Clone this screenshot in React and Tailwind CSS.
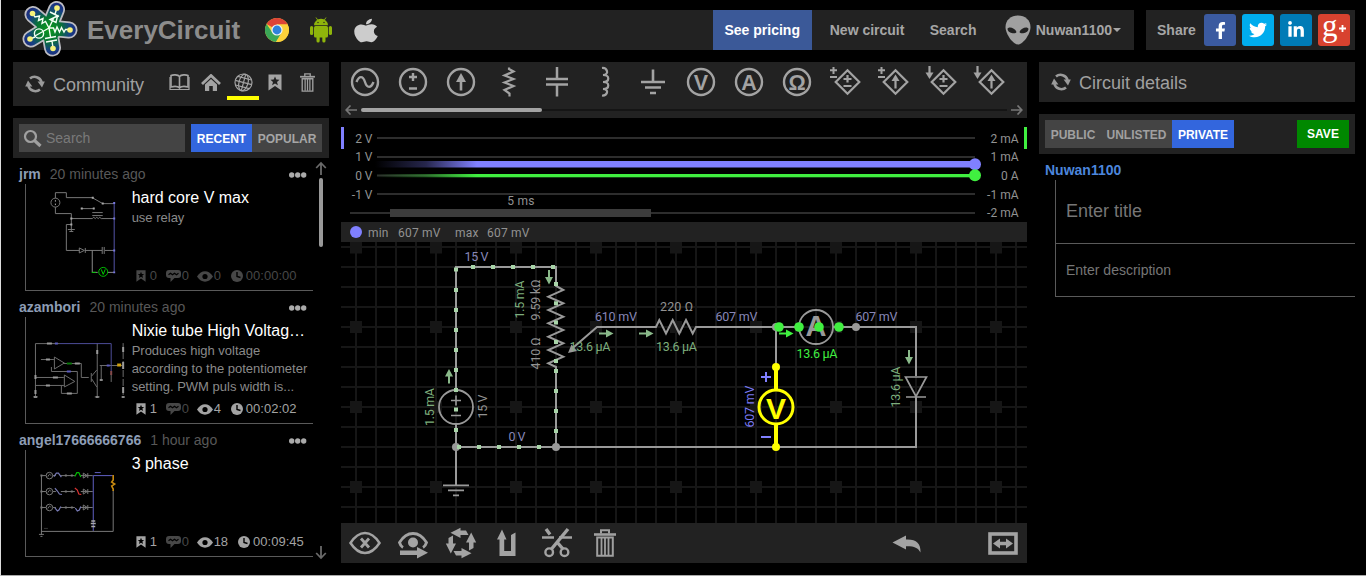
import React from "react";
import { FaApple, FaFacebookF, FaTwitter, FaLinkedinIn } from "react-icons/fa";

const SANS = "font-['Liberation_Sans',Arial,sans-serif]";

/* ---------- small shared icons ---------- */

function Refresh() {
  return (
    <svg width="20" height="18" viewBox="0 0 20 18" className="shrink-0">
      <g fill="none" stroke="#9b9b9b" strokeWidth="2.6">
        <path d="M5 3.6A7.2 7.2 0 0 1 16.6 7" />
        <path d="M15 14.4A7.2 7.2 0 0 1 3.4 11" />
      </g>
      <path d="M12.6 6.6H19.8L17 12.4Z" fill="#9b9b9b" />
      <path d="M0.2 11.4H7.4L3 5.6Z" fill="#9b9b9b" />
    </svg>
  );
}

function Trash({ w, h }) {
  return (
    <svg width={w} height={h} viewBox="0 0 22 28">
      <g fill="none" stroke="#9f9f9f" strokeWidth="2">
        <path d="M0 5.5H22" strokeWidth="2.6" />
        <path d="M7 4.500V1.200H15V4.500" />
        <path d="M3.200 8.500V26.800H18.800V8.500Z" />
        <path d="M7.500 9V26M11 9V26M14.500 9V26" strokeWidth="1.800" />
      </g>
    </svg>
  );
}

function BookmarkStar({ w, h, color = "#a3a3a3", hole = "#222" }) {
  return (
    <svg width={w} height={h} viewBox="0 0 14 17">
      <path d="M0.500 0.500H13.500V16.500L7 12L0.500 16.500Z" fill={color} />
      <path d="M7 2.500L8.300 5.600L11.500 5.800L9 7.900L9.900 11.200L7 9.400L4.100 11.200L5 7.900L2.500 5.800L5.700 5.600Z" fill={hole} />
    </svg>
  );
}

/* ---------- header ---------- */

function Logo() {
  const arms = "M28 27L35.500 8.500M28 27L12 13.500M28 27L10 38M28 27L31.500 47M28 27L48 29";
  return (
    <svg width="58" height="58" viewBox="0 0 58 58" className="-my-[9px] shrink-0">
      <defs>
        <radialGradient id="lg" gradientUnits="userSpaceOnUse" cx="28" cy="28" r="27">
          <stop offset="0" stopColor="#0a9a1a" />
          <stop offset="0.45" stopColor="#087434" />
          <stop offset="0.8" stopColor="#173f86" />
          <stop offset="1" stopColor="#1b2d7c" />
        </radialGradient>
      </defs>
      <g strokeLinecap="round" strokeLinejoin="round" fill="none">
        <path d={arms} stroke="#bcbcc2" strokeWidth="17" />
        <circle cx="28" cy="28" r="13.500" fill="#bcbcc2" />
        <circle cx="28" cy="28" r="11.800" fill="url(#lg)" />
        <path d={arms} stroke="url(#lg)" strokeWidth="13.500" />
      </g>
      <g fill="none" stroke="#f4fff4" strokeWidth="1.400">
        <path d="M28 27L32.500 17.500M34 13L36 7M29 11L38 15.500M36.500 15L29 18.500L35 21.500Z" />
        <path d="M28 27L24.500 20.500L21 22.500L22 17.500L17.500 19.500L18.500 15L14 16L11.500 12.500" />
        <path d="M28 27L32.500 27L34 31L36 26L38.500 31L40.500 26.500L43 31L44.500 28.500H49" />
        <path d="M28 27L14 35M14 36L9 38" />
        <circle cx="18" cy="32.500" r="4.600" />
        <path d="M28 27L29.500 36M24 37.500L35 35.500M25 41L36 39M31 40L32 47" />
      </g>
      <g fill="#f6f27a">
        <circle cx="36" cy="7" r="2.800" />
        <circle cx="11.500" cy="12.500" r="2.800" />
        <circle cx="49" cy="29" r="2.800" />
        <circle cx="9" cy="38" r="2.800" />
        <circle cx="32" cy="47.500" r="2.800" />
      </g>
    </svg>
  );
}

function Chrome() {
  return (
    <svg width="24" height="24" viewBox="0 0 24 24">
      <circle cx="12" cy="12" r="12" fill="#fbd13a" />
      <path d="M12 12L1.600 6A12 12 0 0 1 22.400 6L22.500 6.600H12Z" fill="#dd4437" />
      <path d="M1.600 6A12 12 0 0 0 11 24L16.600 14.800L12 12L7 14Z" fill="#3aa757" />
      <path d="M12 6.600H22.600A12 12 0 0 1 11 24L16.800 14.500Z" fill="#fbd13a" />
      <circle cx="12" cy="12" r="5.600" fill="#eef2f6" />
      <circle cx="12" cy="12" r="4.400" fill="#2e82dc" />
    </svg>
  );
}

function Android() {
  return (
    <svg width="22" height="26" viewBox="0 0 22 26" fill="#8fb50b">
      <path d="M4 8.300A7 6.500 0 0 1 18 8.300Z" />
      <path d="M6 0.500L8 3.500M16 0.500L14 3.500" stroke="#8fb50b" strokeWidth="0.900" />
      <rect x="4" y="9" width="14" height="11.500" rx="1.500" />
      <rect x="0" y="9" width="3.200" height="9" rx="1.600" />
      <rect x="18.800" y="9" width="3.200" height="9" rx="1.600" />
      <rect x="6.500" y="17" width="3.200" height="8.500" rx="1.600" />
      <rect x="12.300" y="17" width="3.200" height="8.500" rx="1.600" />
      <circle cx="8" cy="5.500" r="0.700" fill="#222" />
      <circle cx="14" cy="5.500" r="0.700" fill="#222" />
    </svg>
  );
}

function Header() {
  return (
    <header className="flex h-10 gap-3">
      <div className="flex h-10 w-[1121px] items-center bg-[#222] text-sm font-bold text-[#a6a6a6]">
        <div className="ml-2 w-[66px]"><Logo /></div>
        <span className="w-[178px] text-[26px] leading-10 text-[#8c8c8c]">EveryCircuit</span>
        <span className="w-[45px]"><Chrome /></span>
        <span className="w-[44px]"><Android /></span>
        <FaApple className="h-[27px] w-[24px] shrink-0 text-[#ccc]" preserveAspectRatio="none" />
        <div className="ml-auto flex h-10 w-[99px] items-center justify-center bg-[#3b5998] text-white">See pricing</div>
        <span className="ml-[18px] w-[100px]">New circuit</span>
        <span className="w-[75px]">Search</span>
        <svg width="26" height="30" viewBox="0 0 26 30" className="shrink-0">
          <path d="M13 0.500C20 0.500 25.500 5 25.500 12C25.500 19 18 29.500 13 29.500C8 29.500 0.500 19 0.500 12C0.500 5 6 0.500 13 0.500Z" fill="#a0a0a0" />
          <path d="M2.500 14C3 11 10 12.500 11.500 17C11 19.500 3 18.500 2.500 14ZM23.500 14C23 11 16 12.500 14.500 17C15 19.500 23 18.500 23.500 14Z" fill="#222" />
        </svg>
        <span className="ml-[5px]">Nuwan1100</span>
        <svg width="8" height="4" viewBox="0 0 8 4" className="mr-[13px] ml-px shrink-0"><path d="M0 0H8L4 4Z" fill="#a6a6a6" /></svg>
      </div>
      <div className="flex h-10 w-[209px] items-center gap-[6px] bg-[#222] pl-[11px] text-sm font-bold text-[#a6a6a6]">
        <span className="w-[41px]">Share</span>
        <span className="flex size-8 items-center justify-center rounded-[3px] bg-[#3b5aa0] text-white"><FaFacebookF size={17} /></span>
        <span className="flex size-8 items-center justify-center rounded-[3px] bg-[#00aced] text-white"><FaTwitter size={18} /></span>
        <span className="flex size-8 items-center justify-center rounded-[3px] bg-[#007bb6] text-white"><FaLinkedinIn size={18} /></span>
        <span className="flex size-8 items-center rounded-[3px] bg-[#d8422f] pb-2 pl-1 text-white">
          <span className="font-['Liberation_Serif',serif] text-[31px] leading-8 font-normal">g</span>
          <svg width="9" height="9" viewBox="0 0 9 9" className="mt-1"><path d="M1 4.500H8M4.500 1V8" stroke="#fff" strokeWidth="1.800" /></svg>
        </span>
      </div>
    </header>
  );
}

/* ---------- community column ---------- */

function CommunityBar() {
  return (
    <div className="flex h-11 bg-[#222] pr-[6px] pl-3">
      <div className="flex h-11 items-center gap-2 text-lg text-[#a0a0a0]">
        <Refresh />
        <span className="pt-[2px]">Community</span>
      </div>
      <div className="ml-auto flex">
        <div className="flex h-[38px] w-8 items-center justify-center pt-[3px]">
          <svg width="21" height="17" viewBox="0 0 21 17" fill="none" stroke="#a3a3a3" strokeWidth="1.600">
            <path d="M10.500 2.500C9 0.500 4 0.500 2 1.500V13C5 12.200 9 12.500 10.500 14C12 12.500 16 12.200 19 13V1.500C17 0.500 12 0.500 10.500 2.500V14" />
            <path d="M1 3V15.500H20V3" strokeWidth="1.200" />
          </svg>
        </div>
        <div className="flex h-[38px] w-8 items-center justify-center pt-[3px]">
          <svg width="20" height="17" viewBox="0 0 20 17">
            <path d="M1 10L10 1.500L19 10" fill="none" stroke="#a3a3a3" strokeWidth="2.800" />
            <path d="M4 10.500L10 5L16 10.500V17H11.800V12H8.200V17H4Z" fill="#a3a3a3" />
          </svg>
        </div>
        <div className="flex h-[38px] w-8 items-center justify-center border-b-4 border-[#ff0] pt-[7px]">
          <svg width="19" height="19" viewBox="0 0 19 19" fill="none" stroke="#a3a3a3" strokeWidth="1.200">
            <circle cx="9.500" cy="9.500" r="8.500" />
            <g transform="rotate(15 9.500 9.500)">
              <ellipse cx="9.500" cy="9.500" rx="4.500" ry="8.500" />
              <path d="M9.500 1V18M1 9.500H18M2.500 5H16.500M2.500 14H16.500" />
            </g>
          </svg>
        </div>
        <div className="flex h-[38px] w-8 items-center justify-center pt-[3px]"><BookmarkStar w={14} h={17} /></div>
        <div className="flex h-[38px] w-8 items-center justify-center pt-[3px]"><Trash w={15} h={19} /></div>
      </div>
    </div>
  );
}

function SearchBar() {
  return (
    <div className="flex h-10 items-center bg-[#222] px-[6px] pr-[7px]">
      <div className="flex h-7 w-[166px] items-center gap-1 bg-[#444] pl-1 text-sm text-[#7a7a7a]">
        <svg width="19" height="19" viewBox="0 0 19 19" fill="none" stroke="#a0a0a0">
          <circle cx="7.500" cy="7.500" r="5.500" strokeWidth="2.200" />
          <path d="M11.500 11.500L17.500 17" strokeWidth="3.200" />
        </svg>
        <span>Search</span>
      </div>
      <div className="ml-[6px] flex h-7 text-xs font-bold">
        <span className="flex w-[61px] items-center justify-center bg-[#36d] pt-px text-white">RECENT</span>
        <span className="flex w-[70px] items-center justify-center bg-[#444] pt-px text-[#a6a6a6]">POPULAR</span>
      </div>
    </div>
  );
}

function Thumb1() {
  return (
    <svg width="106" height="106" viewBox="26 184 106 106" fill="none" strokeWidth="1" stroke="#777">
      <circle cx="55.500" cy="202.500" r="4.500" />
      <path d="M55.500 200v1.500M55.500 203.500v1.500" stroke="#aaa" />
      <path d="M55.500 198V192.500H66.500V197.500H92.500L103 203.500H114M81 208.500H94M55.500 207V213.500H71.500V231M71.500 218.500H92.500M92.500 212.500H103M92.500 215.500H103M92.500 218.500q1.500 -2.500 3 0q1.500 -2.500 3 0q1.500 -2.500 3 0H114" />
      <path d="M68 229.500H75M69.500 231.500H73.500M71.500 224.500H66.500V250.500H79.500M79.500 248V253L84.500 250.500ZM85.500 248V253M85 250.500H102.500M102.500 247V254M104.500 247V254M105 250.500H114" />
      <path d="M114.500 203V272" stroke="#5555aa" />
      <path d="M92.500 250.500V272.500H98M108 272.500H114" stroke="#8a8a8a" />
      <circle cx="103.500" cy="272" r="4.500" stroke="#0b0" />
      <path d="M101.500 269.500L103.500 274.500L105.500 269.500" stroke="#0c0" />
      <path d="M92 272.500h4" stroke="#0c0" />
      <g fill="#7777dd" stroke="none">
        <path d="M113.500 202h2v2h-2zM113.500 217.500h2v2h-2zM113.500 249.500h2v2h-2zM113.500 271.500h2v2h-2z" />
        <path d="M70.500 217.500h2v2h-2zM70.500 223.500h2v2h-2zM81 207.500h2v2h-2zM93 207.500h2v2h-2zM92 196.500h2v2h-2zM102 202.500h2v2h-2z" fill="#aaa" />
      </g>
    </svg>
  );
}

function Thumb2() {
  return (
    <svg width="106" height="106" viewBox="26 317 106 106" fill="none" strokeWidth="1" stroke="#6c6c6c">
      <path d="M35.500 397V343.500H60M41 359.500H54M54.500 357V369L64.500 363ZM64 363.500H81.500V377.500H89M51.500 367V371.500H77.500V393.500H61.500V386M35 377.500H64M35 385.500H64M64.500 375V387L75 381.500ZM91.500 373V382M92 376L97 370M92 379L97 387M97.500 343V397M100 365.500H123M101.500 365V380M111.500 373V382M95 397h5M33 397h5" />
      <path d="M60 343.500H111.500V372" stroke="#4d4d9a" />
      <path d="M123.500 343V397" strokeDasharray="7 2" />
      <g strokeWidth="2">
        <path d="M47 343.500H52M46 359.500H50M75 363.500H80M53 377.500H58M46 385.500H50M67 393.500H72M97.500 350V354M35.500 375V379M35.500 390V394M123.500 347V352M123.500 362V369M123.500 387V393" stroke="#999" />
        <path d="M67 363.500H72" stroke="#087808" />
        <path d="M55 343.500H58M67 371.500H71M107 365.500H110" stroke="#5c5cc0" />
        <path d="M117.500 365H121.500" stroke="#d0a010" strokeWidth="3" />
        <path d="M111.500 371V375" stroke="#854a4a" />
      </g>
      <path d="M34 396h3v2h-3zM96 396h3v2h-3zM122 396h3v2h-3zM100 379h3v2h-3z" fill="#888" stroke="none" />
    </svg>
  );
}

function Thumb3() {
  return (
    <svg width="106" height="106" viewBox="26 450 106 106" fill="none" strokeWidth="1" stroke="#777">
      <path d="M41.500 475V535M39 534.500H44M40.500 536.500H42.500M41 531.500H113.500V490" />
      {[475.5, 491.5, 507.5].map((y) => (
        <g key={y}>
          <path d={`M41 ${y}H46M53 ${y}H56M61 ${y}H75M81 ${y}H93M83.500 ${y - 2.500}v5l4 -2.500zM88 ${y - 2.500}v5`} />
          <circle cx="49.500" cy={y} r="3.300" />
          <path d={`M48 ${y + 1}q1.500 -4 3 -1`} />
          <path d={`M65 ${y - 1}h2v2h-2zM71 ${y - 1}h2v2h-2zM40.500 ${y - 1}h2v2h-2z`} fill="#777" stroke="none" />
        </g>
      ))}
      <g strokeWidth="1.200">
        <path d="M54 476.500L56.500 473L58.500 473L61.500 477M55 488L57.500 491L59.500 494L62 494.500M55 508L57.500 511L59 510L61 506.500M75.500 508L77.500 511L79.500 510L81 506.500" stroke="#777ab5" />
        <path d="M75 476.500L77 472.500L79 472.500L81 477" stroke="#0b0" />
        <path d="M75 488L77.500 490L79 494L81.500 494.500" stroke="#d33" />
      </g>
      <path d="M93.500 531V475.500H113M95 472.500H101" stroke="#6060c4" />
      <path d="M113.500 475V480L112 482L115 484L112 486L113.500 489V491" stroke="#c88a10" strokeWidth="1.600" />
      <path d="M91.500 521H95.500M91 523.500H96M91.500 526.500H95.500" stroke="#aaa" strokeWidth="1.500" />
      <path d="M44 528.500h4" stroke="#333" />
    </svg>
  );
}

const posts = [
  { user: "jrm", ago: "20 minutes ago", title: "hard core V max", text: "use relay", thumb: Thumb1, stats: ["0", "0", "0", "00:00:00"] },
  { user: "azambori", ago: "20 minutes ago", title: "Nixie tube High Voltag…", text: "Produces high voltage according to the potentiometer setting. PWM puls width is...", thumb: Thumb2, stats: ["1", "0", "4", "00:02:02"] },
  { user: "angel17666666766", ago: "1 hour ago", title: "3 phase", text: "", thumb: Thumb3, stats: ["1", "0", "18", "00:09:45"] },
];

const tone = (value) => (/^[0:]+$/.test(value) ? "text-[#474747]" : "text-[#a3a3a3]");

function Stats({ values }) {
  const [stars, comments, views, time] = values;
  return (
    <div className="flex h-4 items-center pl-1 text-[13px] leading-4">
      <span className={`flex w-[30px] items-center gap-1 ${tone(stars)}`}>
        <BookmarkStar w={10} h={12} color="currentColor" hole="#000" />{stars}
      </span>
      <span className={`flex w-[31px] items-center gap-px ${tone(comments)}`}>
        <svg width="15" height="12" viewBox="0 0 15 12">
          <path d="M3 0H12Q15 0 15 3V5Q15 8 12 8H8.500L4.500 12V8H3Q0 8 0 5V3Q0 0 3 0Z" fill="currentColor" />
          <path d="M2.500 4.800L4.500 3.300L6.500 4.800L8.500 3.300L10.500 4.800L12.500 3.300" fill="none" stroke="#000" strokeWidth="1.200" />
        </svg>
        {comments}
      </span>
      <span className={`flex items-center gap-px ${tone(views)}`}>
        <svg width="16" height="11" viewBox="0 0 16 11">
          <path d="M0 5.500Q3.500 0.300 8 0.300T16 5.500Q12.500 10.700 8 10.700T0 5.500Z" fill="currentColor" />
          <circle cx="8" cy="5.500" r="2.600" fill="#000" />
        </svg>
        {views}
      </span>
      <span className={`ml-[10px] flex items-center gap-[3px] ${tone(time)}`}>
        <svg width="12" height="12" viewBox="0 0 12 12">
          <circle cx="6" cy="6" r="6" fill="currentColor" />
          <path d="M6 2V6.500L9.500 7.500" fill="none" stroke="#000" strokeWidth="1.400" />
        </svg>
        {time}
      </span>
    </div>
  );
}

function Post({ post }) {
  const Thumb = post.thumb;
  return (
    <article className="mb-[7px] h-[126px] w-[294px]">
      <div className="flex h-[19px] items-center text-sm leading-[19px]">
        <b className="text-[#8d9db5]">{post.user}</b>
        <span className="ml-[9px] text-[#585858]">{post.ago}</span>
        <svg width="18" height="6" viewBox="0 0 18 6" fill="#aaa" className="mt-px mr-[6px] ml-auto">
          <circle cx="2.700" cy="3" r="2.700" /><circle cx="8.700" cy="3" r="2.700" /><circle cx="14.700" cy="3" r="2.700" />
        </svg>
      </div>
      <div className="ml-[6px] flex h-[107px] border-b border-l border-[#5a5a5a]">
        <Thumb />
        <div className="flex w-[182px] flex-col">
          <h3 className="pt-1 text-base leading-[19px] whitespace-nowrap text-white">{post.title}</h3>
          <p className="mt-[2px] h-[59px] text-[13px] leading-[18px] text-[#8a8a8a]">{post.text}</p>
          <Stats values={post.stats} />
        </div>
      </div>
    </article>
  );
}

function PostList() {
  return (
    <div className="flex h-[405px] pt-[7px] pl-[6px]">
      <div>{posts.map((p) => <Post key={p.user} post={p} />)}</div>
      <div className="-mt-1 ml-[2px] flex h-[399px] w-3 flex-col items-center">
        <svg width="12" height="14" viewBox="0 0 12 14" fill="none" stroke="#6a6a6a" strokeWidth="1.800"><path d="M6 14V2M1.200 7L6 2L10.800 7" /></svg>
        <div className="mt-[3px] h-[69px] w-1 rounded-sm bg-[#999]" />
        <svg width="12" height="14" viewBox="0 0 12 14" fill="none" stroke="#6a6a6a" strokeWidth="1.800" className="mt-auto"><path d="M6 0V12M1.200 7L6 12L10.800 7" /></svg>
      </div>
    </div>
  );
}

/* ---------- simulator column ---------- */

const Ring = () => <circle cx="24" cy="20" r="13" strokeWidth="2.400" />;
const Letter = ({ children }) => (
  <text x="24" y="27.500" fontSize="21.500" fontWeight="700" textAnchor="middle" fill="#a3a3a3" stroke="none" fontFamily="Liberation Sans, sans-serif">{children}</text>
);
const Diamond = () => <path d="M26.500 8.200L38.300 20L26.500 31.800L14.700 20Z" strokeWidth="2.200" />;
const SmallPM = () => <path d="M12.500 5V12M9 8.300H16M9 15H16" strokeWidth="2" />;
const SmallArrow = () => <g><path d="M12.500 4V12" /><path d="M8.500 10.500H16.500L12.500 17Z" fill="#a3a3a3" stroke="none" /></g>;
const InnerPM = () => <path d="M26.500 13V20.500M22.500 17H30.500M22.500 24H30.500" />;
const InnerArrow = () => <g><path d="M26.500 18V26.500" /><path d="M22.500 19H30.500L26.500 12.500Z" fill="#a3a3a3" stroke="none" /></g>;

const parts = [
  <><Ring /><path d="M15.500 20C18 13.500 22 13.500 24 20S30 26.500 32.500 20" strokeWidth="2.400" /></>,
  <><Ring /><path d="M24 11V19M20 15H28M20 26.500H28" strokeWidth="2.400" /></>,
  <><Ring /><path d="M24 18V28.500" strokeWidth="2.600" /><path d="M19 20H29L24 11Z" fill="#a3a3a3" stroke="none" /></>,
  <path d="M24 5.500V7L28.500 9.500L19.500 13.500L28.500 17L19.500 20.500L28.500 24L19.500 28L24.500 31.500V34.500" />,
  <path d="M24 5V16.500M13 17H35M13 22.500H35M24 23V34.500" strokeWidth="2.500" />,
  <path d="M21 6C26 5.500 29 12.500 22 13C29 13 29 20 22 20C29 20 29 27 22 27C29 27.500 26 34 21 33.500" />,
  <path d="M24 7.500V20M12 20H36M16 25.500H32M21 31H27" strokeWidth="2.600" />,
  <><Ring /><Letter>V</Letter></>,
  <><Ring /><Letter>A</Letter></>,
  <><Ring /><Letter>Ω</Letter></>,
  <><Diamond /><SmallPM /><InnerPM /></>,
  <><Diamond /><SmallPM /><InnerArrow /></>,
  <><Diamond /><SmallArrow /><InnerPM /></>,
  <><Diamond /><SmallArrow /><InnerArrow /></>,
];

function PartsBar() {
  return (
    <div className="flex h-14 flex-col bg-[#222]">
      <div className="flex h-10">
        {parts.map((p, i) => (
          <svg key={i} width="48" height="40" viewBox="0 0 48 40" fill="none" stroke="#a3a3a3" strokeWidth="2.200">{p}</svg>
        ))}
      </div>
      <div className="flex h-4 items-center px-1">
        <svg width="12" height="10" viewBox="0 0 12 10" fill="none" stroke="#777" strokeWidth="1.700"><path d="M12 5H1.500M5.500 0.500L1.200 5L5.500 9.500" /></svg>
        <div className="ml-1 flex h-1 w-[646px] items-center">
          <div className="h-1 w-[181px] rounded-sm bg-[#a3a3a3]" />
          <div className="h-[2px] flex-1 bg-[#151515]" />
        </div>
        <svg width="12" height="10" viewBox="0 0 12 10" fill="none" stroke="#777" strokeWidth="1.700" className="ml-1"><path d="M0 5H10.500M6.500 0.500L10.800 5L6.500 9.500" /></svg>
      </div>
    </div>
  );
}

function Plot() {
  const rows = [
    [138, 143, "2 V", "2 mA"],
    [157, 161, "1 V", "1 mA"],
    [175.5, 180, "0 V", "0 A"],
    [194, 199, "-1 V", "-1 mA"],
    [213, 217, null, "-2 mA"],
  ];
  return (
    <svg width="686" height="104" viewBox="341 118 686 104" className="block" fontFamily="Roboto, sans-serif" fontSize="12">
      <defs>
        <linearGradient id="pv" gradientUnits="userSpaceOnUse" x1="375" x2="477" y1="0" y2="0"><stop offset="0" stopColor="#8080ff" stopOpacity="0" /><stop offset="0.500" stopColor="#8080ff" stopOpacity="0.300" /><stop offset="1" stopColor="#8080ff" /></linearGradient>
        <linearGradient id="pg" gradientUnits="userSpaceOnUse" x1="375" x2="477" y1="0" y2="0"><stop offset="0" stopColor="#40ef40" stopOpacity="0" /><stop offset="0.500" stopColor="#40ef40" stopOpacity="0.350" /><stop offset="1" stopColor="#40ef40" /></linearGradient>
      </defs>
      {rows.map(([y, base, l, r]) => (
        <g key={y} fill="#929292">
          <rect x={l ? 377 : 350} y={y - 1} width={l ? 598 : 625} height="2" fill="#2d2d2d" />
          {l && <text x="372.500" y={base} textAnchor="end">{l}</text>}
          <text x="1018.500" y={base} textAnchor="end">{r}</text>
        </g>
      ))}
      <rect x="390" y="209" width="261" height="8" fill="#3c3c3c" />
      <text x="521" y="205" textAnchor="middle" fill="#929292" letterSpacing="0.250">5 ms</text>
      <rect x="375" y="161" width="600" height="6.500" fill="url(#pv)" />
      <rect x="375" y="174" width="600" height="3.300" fill="url(#pg)" />
      <circle cx="975" cy="164.300" r="6" fill="#8080ff" />
      <circle cx="975" cy="175.300" r="6" fill="#40ef40" />
      <rect x="341" y="127" width="3" height="22" fill="#8080ff" />
      <rect x="1024" y="127" width="3" height="22" fill="#40ef40" />
    </svg>
  );
}

function ReadoutBar() {
  return (
    <div className="flex h-5 items-center bg-[#222] pl-[9px] font-['Roboto',sans-serif] text-xs tracking-[0.2px] text-[#929292]">
      <span className="size-3 rounded-full bg-[#8080ff]" />
      <span className="mt-px ml-[6px] w-[30px]">min</span>
      <span className="mt-px w-[57px]">607 mV</span>
      <span className="mt-px w-8">max</span>
      <span className="mt-px">607 mV</span>
    </div>
  );
}

const columns = Array.from({ length: 34 }, (_, i) => 356 + i * 20);
const lines = Array.from({ length: 14 }, (_, i) => 247 + i * 20);

function Label({ x, y, w, color = "#8787b8", up, children }) {
  return (
    <text x={x} y={y} textLength={w} fill={color} transform={up ? `rotate(-90 ${x} ${y})` : undefined}>{children}</text>
  );
}

const flow = [
  [[456, 269.500], [456, 290], [456, 310], [456, 330], [456, 350], [456, 370], [456, 390], [456, 409.500], [456, 430]],
  [[473, 267], [493, 267], [513, 267], [533, 267], [553, 267]],
  [[556, 284], [556, 303.300], [556, 322.500], [556, 342], [556, 361], [556, 371], [556, 391], [556, 411], [556, 431]],
  [[459, 447], [479, 447], [499, 447], [519, 447], [539, 447]],
].flat();

function Arrow({ x, y, angle, color = "#8ab98a" }) {
  return (
    <g transform={`translate(${x} ${y}) rotate(${angle})`}>
      <path d="M-7 0H1" stroke={color} strokeWidth="2" />
      <path d="M0 -4L7.500 0L0 4Z" fill={color} />
    </g>
  );
}

function Schematic() {
  return (
    <svg width="686" height="281" viewBox="341 242 686 281" className="block" fontFamily="Roboto, sans-serif" fontSize="12.500">
      <g fill="#161616">
        {columns.map((x) => <rect key={x} x={x - 1} y="242" width="2" height="281" />)}
        {lines.map((y) => <rect key={y} x="341" y={y - 1} width="686" height="2" />)}
        {[247.500, 327, 407, 487].map((y) => columns.filter((_, i) => i % 4 === 0).map((x) => <rect key={`${x}-${y}`} x={x - 6} y={y - 6} width="12" height="12" />))}
      </g>
      <g fill="none" stroke="#999" strokeWidth="2">
        <path d="M456 390V267H556V286L563.300 290L548.300 296.700L563.300 303.300L548.300 310L563.300 316.700L548.300 323.300L563.300 330L548.300 336.700L563.300 343.300L548.300 350L563.300 356.700L548.300 363.300L556 367V447" strokeWidth="2" />
        <path d="M456 424V485M456 447H916V397M916 376V327H833M799 327H776M776 327V367" />
        <circle cx="456" cy="407" r="17" strokeWidth="1.800" />
        <path d="M451 400.500H461M456 395.500V405.500M451 415.500H461" strokeWidth="1.600" />
        <path d="M443 485.300H469M448 490.300H464M453 495.300H459" strokeWidth="1.800" />
        <path d="M776 327H696L692.700 333.500L686 320L679.300 333.500L672.700 320L666 333.500L659.300 320L656 327H597L571 349.500" strokeWidth="2" />
        <circle cx="816" cy="327" r="17" strokeWidth="1.800" />
        <path d="M905.500 377H926.500L916 396.500ZM906 397H926" strokeWidth="1.700" />
      </g>
      <g fill="#999">
        <path d="M568 353L571.500 344.500L577 351Z" />
        <circle cx="456" cy="447" r="4" /><circle cx="556" cy="447" r="4" /><circle cx="776" cy="327" r="4" /><circle cx="856" cy="327" r="4" />
        <text x="816" y="336" fontSize="29" fontWeight="700" textAnchor="middle" fontFamily="Liberation Sans, sans-serif">A</text>
      </g>
      {flow.map(([x, y], i) => <rect key={i} x={x - 2} y={y - 2} width="4" height="4" fill="#a8d4a8" />)}
      <Arrow x={449} y={376.500} angle={-90} />
      <Arrow x={549} y={277} angle={90} />
      <Arrow x={606} y={333.500} angle={0} />
      <Arrow x={646} y={333.500} angle={0} />
      <Arrow x={909} y={357} angle={90} />
      <Arrow x={786} y={333.500} angle={0} color="#40ef40" />
      {[779, 799, 819, 839].map((x) => <circle key={x} cx={x} cy="327" r="4.800" fill="#40ef40" />)}
      <g fill="none" stroke="#ff0" strokeWidth="4">
        <path d="M776 367V390M776 424V447" />
        <circle cx="776" cy="407" r="17" strokeWidth="3" />
      </g>
      <g fill="#ff0">
        <circle cx="776" cy="367" r="4" /><circle cx="776" cy="447" r="4" />
        <text x="776" y="418.500" fontSize="30" fontWeight="700" textAnchor="middle" fontFamily="Liberation Sans, sans-serif">V</text>
      </g>
      <path d="M761 377H771M766 372V382M761 437H771" stroke="#8080ff" strokeWidth="2" />
      <Label x={464.500} y={261} w={24}>15 V</Label>
      <Label x={508.500} y={441} w={17}>0 V</Label>
      <Label x={595} y={321} w={42}>610 mV</Label>
      <Label x={715.500} y={321} w={42}>607 mV</Label>
      <Label x={855.500} y={321} w={42}>607 mV</Label>
      <Label x={660} y={311} w={33} color="#929292">220 Ω</Label>
      <Label x={569.500} y={351} w={41} color="#7dae7d">13.6 µA</Label>
      <Label x={656} y={351} w={41} color="#7dae7d">13.6 µA</Label>
      <Label x={796.500} y={358} w={41} color="#40ef40">13.6 µA</Label>
      <Label x={434} y={426} w={38} color="#7dae7d" up>1.5 mA</Label>
      <Label x={487} y={418.500} w={24} color="#929292" up>15 V</Label>
      <Label x={524} y={318.500} w={38} color="#7dae7d" up>1.5 mA</Label>
      <Label x={540} y={320.500} w={41} color="#929292" up>9.59 kΩ</Label>
      <Label x={540} y={369.500} w={32} color="#929292" up>410 Ω</Label>
      <Label x={754} y={427.500} w={42} color="#7a7af2" up>607 mV</Label>
      <Label x={900} y={407.500} w={41} color="#7dae7d" up>13.6 µA</Label>
    </svg>
  );
}

const tools = [
  <><path d="M9.500 20Q16 10 24 10T38.500 20Q32 30 24 30T9.500 20Z" strokeWidth="2.500" /><path d="M20 15.500L28 24.500M28 15.500L20 24.500" strokeWidth="2.800" /></>,
  <><path d="M14 24.500Q11.500 23 10.500 19.500Q16 10.500 24 10.500T37.500 19.500Q36.500 23 34 24.500" strokeWidth="2.800" /><circle cx="24" cy="19.500" r="5" fill="#a3a3a3" stroke="none" /><path d="M11 27.500H28V24L39 29.800L28 35.500V32H11Z" fill="#a3a3a3" stroke="none" /></>,
  <g fill="#a3a3a3" stroke="none">
    {[0, 90, 180, 270].map((a) => <path key={a} transform={`rotate(${a} 24 20)`} d="M13.500 9.800L23.500 4.800V7.500H29L31.500 12H23.500V15Z" />)}
  </g>,
  <g fill="#a3a3a3" stroke="none"><path d="M12 16.500L17 6.500L21.500 16.500H19.200V28H26V12L30.500 9.500V33H14.500V16.500Z" /></g>,
  <><path d="M9 14.500H21M26 14.500H39" strokeWidth="2.600" /><path d="M35 6L18.500 26M13 6L17 11.500M23.500 18.500L30 26" strokeWidth="3.400" /><circle cx="16.200" cy="29.200" r="3.800" /><circle cx="31.500" cy="29.200" r="3.800" /></>,
];

function ToolBar() {
  return (
    <div className="flex h-10 items-center bg-[#222]">
      {tools.map((t, i) => (
        <svg key={i} width="48" height="40" viewBox="0 0 48 40" fill="none" stroke="#a3a3a3" strokeWidth="2.400">{t}</svg>
      ))}
      <span className="flex w-12 justify-center"><Trash w={22} h={28} /></span>
      <svg width="30" height="18" viewBox="0 0 30 18" className="mt-[2px] ml-auto"><path d="M0.500 7.500L14 0.500V4.500C24 4 29 8 28.500 17.500C26 12.500 22 11 14 11.200V14.500Z" fill="#a3a3a3" /></svg>
      <svg width="30" height="23" viewBox="0 0 30 23" className="mr-[9px] ml-[66px]">
        <rect x="2" y="2" width="26" height="19" fill="none" stroke="#a3a3a3" strokeWidth="3.600" />
        <path d="M5 11.500L12 6.500V9.800H18V6.500L25 11.500L18 16.500V13.200H12V16.500Z" fill="#a3a3a3" />
      </svg>
    </div>
  );
}

/* ---------- details column ---------- */

function Details() {
  return (
    <aside className="w-[316px]">
      <div className="flex h-10 items-center gap-2 bg-[#222] pl-3 text-lg text-[#a0a0a0]">
        <Refresh />
        <span className="pt-[2px]">Circuit details</span>
      </div>
      <div className="mt-3 flex h-10 items-center justify-between bg-[#222] px-[6px] text-xs font-bold text-[#a0a0a0]">
        <div className="flex h-7">
          <span className="flex w-14 items-center justify-center bg-[#444] pt-px">PUBLIC</span>
          <span className="flex w-[71px] items-center justify-center bg-[#444] pt-px">UNLISTED</span>
          <span className="flex w-[62px] items-center justify-center bg-[#36d] pt-px text-white">PRIVATE</span>
        </div>
        <span className="flex h-7 w-[52px] items-center justify-center bg-[#080] text-white">SAVE</span>
      </div>
      <div className="mt-[7px] h-[19px] pl-[6px] text-sm leading-[19px] font-bold text-[#4c86dc]">Nuwan1100</div>
      <div className="ml-4 border-l border-[#5a5a5a] text-[#767676]">
        <div className="flex h-16 items-center border-b border-[#5a5a5a] pb-[2px] pl-[10px] text-lg">Enter title</div>
        <div className="flex h-[53px] items-center border-b border-[#5a5a5a] pl-[10px] text-sm">Enter description</div>
      </div>
    </aside>
  );
}

export default function App() {
  return (
    <div className={`h-[576px] w-[1366px] overflow-hidden border-b border-l border-b-[#aaa] border-l-[#ddd] bg-black pt-[10px] pl-3 ${SANS}`}>
      <Header />
      <div className="mt-3 flex gap-3">
        <section className="w-[316px]">
          <CommunityBar />
          <div className="mt-3"><SearchBar /></div>
          <PostList />
        </section>
        <section className="w-[686px]">
          <PartsBar />
          <Plot />
          <ReadoutBar />
          <Schematic />
          <ToolBar />
        </section>
        <Details />
      </div>
    </div>
  );
}
